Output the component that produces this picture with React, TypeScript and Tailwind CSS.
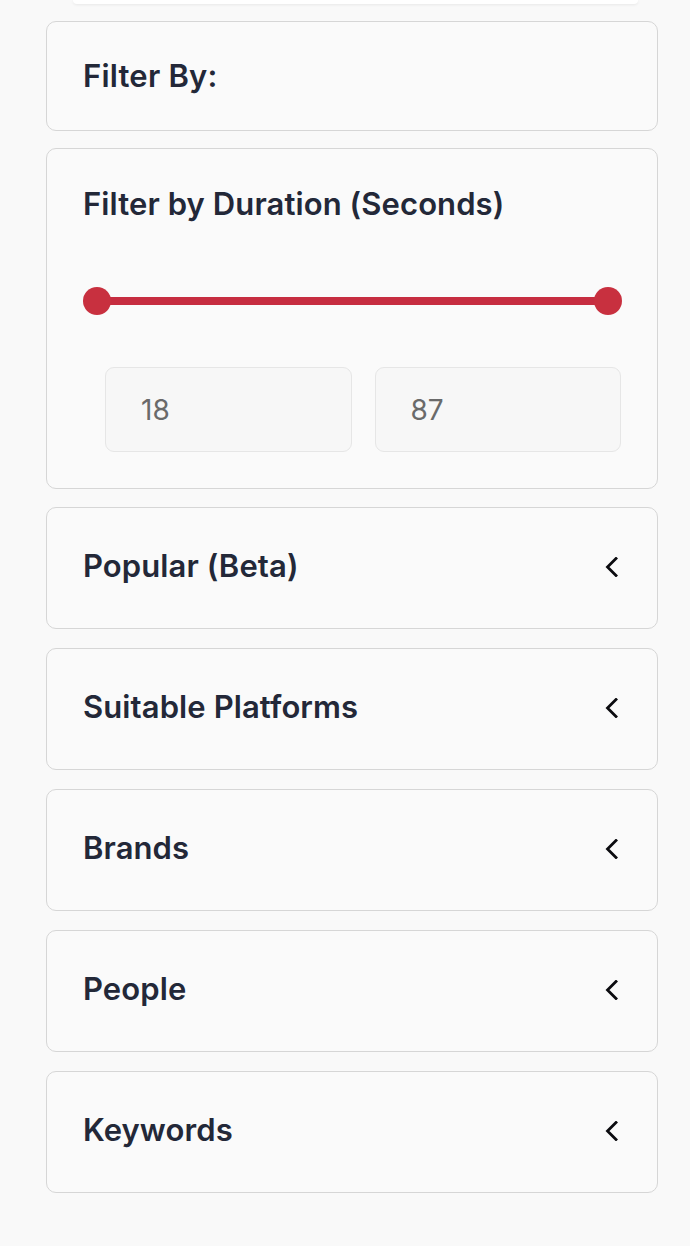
import { useState } from 'react'

const sections = ['Popular (Beta)', 'Suitable Platforms', 'Brands', 'People', 'Keywords']

function Chevron() {
  return (
    <svg width="13" height="20" viewBox="0 0 13 20" fill="none">
      <path
        d="M11 1.5 L2.5 10 L11 18.5"
        stroke="#0b0b0f"
        strokeWidth="2.8"
        strokeLinecap="square"
        strokeLinejoin="miter"
      />
    </svg>
  )
}

export default function App() {
  const [min] = useState(18)
  const [max] = useState(87)

  return (
    <div className="min-h-[1246px] w-full bg-[#f9f9f9] font-['Inter',sans-serif] text-[#232838]">
      <div className="ml-[73px] mr-[52px] h-[4px] rounded-b-2xl bg-white shadow-[0_1px_3px_0_#00000012]" />

      <div className="mt-[17px] flex flex-col gap-[18px] pl-[46px] pr-[32px] pb-[52px]">
        <div className="flex h-[110px] items-center rounded-[10px] border border-[#d6d6d6] bg-[#fafafa] px-[36px]">
          <h2 className="text-[31px] font-semibold tracking-[0.2px]">Filter By:</h2>
        </div>

        <div className="-mt-[1px] flex h-[341px] flex-col rounded-[10px] border border-[#d6d6d6] bg-[#fafafa] px-[36px] pt-[35px]">
          <h3 className="text-[31px] leading-[40px] font-semibold tracking-[0.1px]">
            Filter by Duration (Seconds)
          </h3>

          <div className="relative mt-[63px] h-[28px]">
            <div className="absolute left-[13px] right-[13px] top-[10px] h-[8px] bg-[#c62d40]" />
            <span className="absolute left-0 top-0 h-[28px] w-[28px] rounded-full bg-[#c8303f]" />
            <span className="absolute right-[-1px] top-0 h-[28px] w-[28px] rounded-full bg-[#c8303f]" />
          </div>

          <div className="mt-[52px] flex gap-[23px] pl-[22px]">
            <div className="flex h-[85px] flex-1 items-center rounded-[9px] border border-[#e6e6e6] bg-[#f7f7f7] pl-[35px] text-[28px] text-[#6a6a6a]">
              {min}
            </div>
            <div className="flex h-[85px] flex-1 items-center rounded-[9px] border border-[#e6e6e6] bg-[#f7f7f7] pl-[35px] text-[28px] text-[#6a6a6a]">
              {max}
            </div>
          </div>
        </div>

        <div className="flex flex-col gap-[19px]">
          {sections.map((s) => (
            <div
              key={s}
              className="flex h-[122px] items-center justify-between rounded-[10px] border border-[#d6d6d6] bg-[#fafafa] pb-[3px] pl-[36px] pr-[39px]"
            >
              <span className="text-[31px] font-semibold tracking-[0.1px]">{s}</span>
              <Chevron />
            </div>
          ))}
        </div>
      </div>
    </div>
  )
}
